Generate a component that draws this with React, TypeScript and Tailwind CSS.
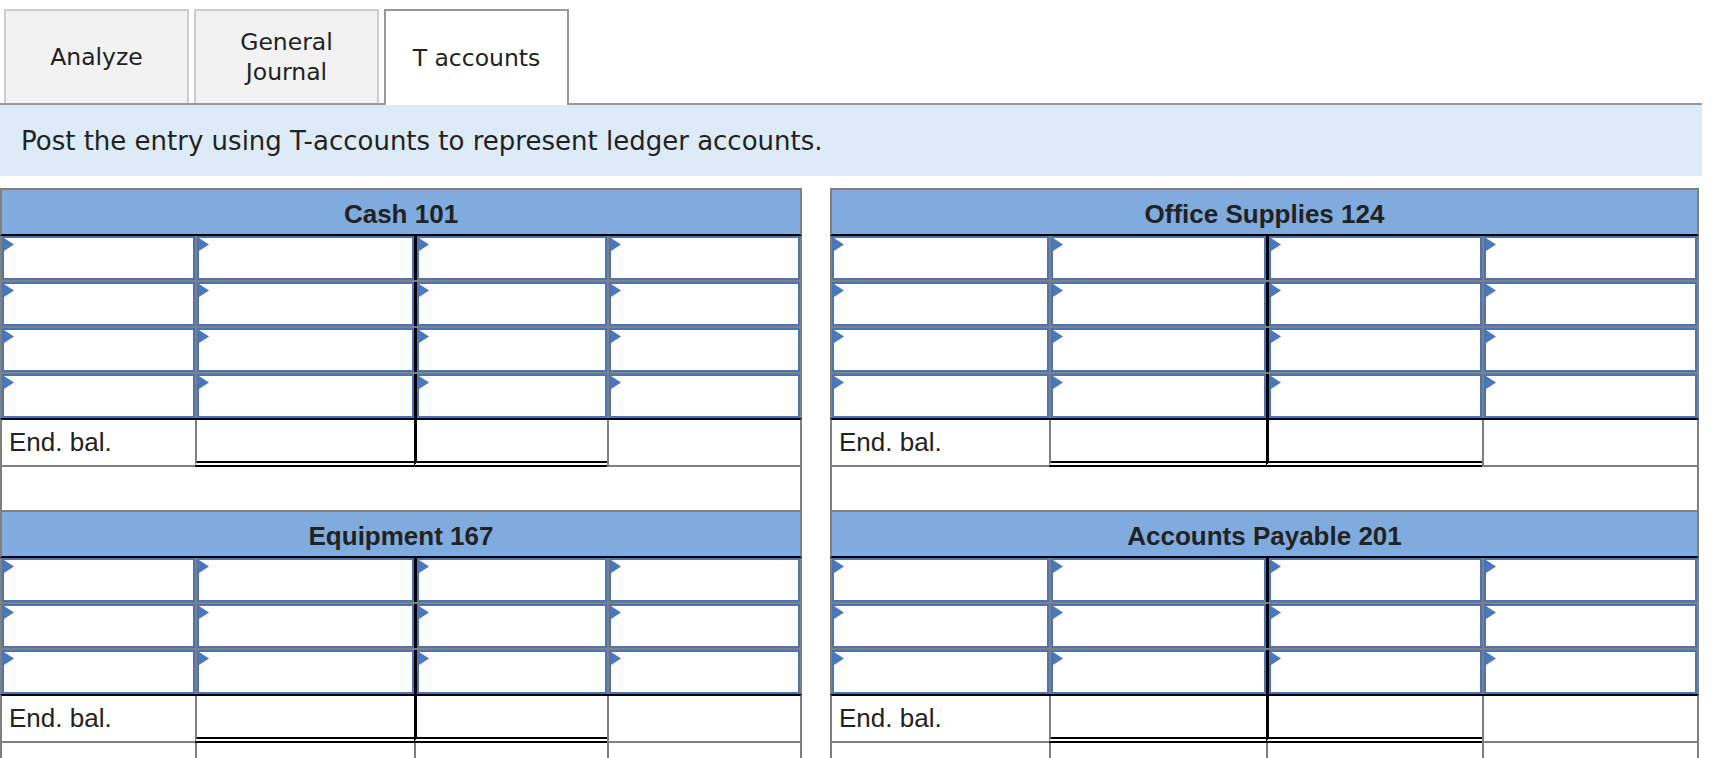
import React from "react";

type Cols = [string, string, string, string];

const LEFT_COLS: Cols = ["w-[193px]", "w-[219px]", "w-[193px]", "w-[193px]"];
const RIGHT_COLS: Cols = ["w-[217px]", "w-[217px]", "w-[216px]", "w-[215px]"];

const Flag = () => (
  <svg
    className="absolute left-0 top-0"
    width="10"
    height="13"
    viewBox="0 0 10 13"
  >
    <polygon points="0,0 10,6.5 0,13" fill="#4a78bd" />
  </svg>
);

const InputCell = () => (
  <div className="relative h-full border-2 border-[#4a74b5] bg-white">
    <Flag />
  </div>
);

const Header: React.FC<{ title: string }> = ({ title }) => (
  <div className="flex h-[48px] items-center justify-center border-2 border-[#808080] border-b-black bg-[#80abdf] pt-[4px] font-['Liberation_Sans',sans-serif] text-[26px] font-bold text-[#222]">
    {title}
  </div>
);

const InputRow: React.FC<{ cols: Cols; first: boolean }> = ({ cols, first }) => (
  <div
    className={
      first
        ? "flex h-[44px] border-x-2 border-[#808080]"
        : "flex h-[46px] border-x-2 border-t-2 border-[#808080]"
    }
  >
    <div className={cols[0]}>
      <InputCell />
    </div>
    <div className={`${cols[1]} border-l-2 border-[#808080]`}>
      <InputCell />
    </div>
    <div className={`${cols[2]} border-l-[3px] border-black`}>
      <InputCell />
    </div>
    <div className={`${cols[3]} border-l-2 border-[#808080]`}>
      <InputCell />
    </div>
  </div>
);

const EndBalRow: React.FC<{ cols: Cols }> = ({ cols }) => (
  <div className="flex h-[49px] border-x-2 border-t-2 border-[#808080] border-t-black font-['Liberation_Sans',sans-serif] text-[26px] text-[#222]">
    <div className={`${cols[0]} flex items-center border-b-2 border-[#808080] pl-[7px]`}>
      End. bal.
    </div>
    <div
      className={`${cols[1]} border-b-[6px] border-l-2 border-[#808080] border-b-black [border-bottom-style:double]`}
    />
    <div
      className={`${cols[2]} border-b-[6px] border-l-[3px] border-black [border-bottom-style:double]`}
    />
    <div className={`${cols[3]} border-b-2 border-l-2 border-[#808080]`} />
  </div>
);

const Spacer = () => <div className="h-[43px] border-x-2 border-[#808080]" />;

const TailRow: React.FC<{ cols: Cols }> = ({ cols }) => (
  <div className="flex h-[43px] border-x-2 border-[#808080]">
    <div className={cols[0]} />
    <div className={`${cols[1]} border-l-2 border-[#808080]`} />
    <div className={`${cols[2]} border-l-2 border-[#808080]`} />
    <div className={`${cols[3]} border-l-2 border-[#808080]`} />
  </div>
);

const TAccount: React.FC<{ title: string; rows: number; cols: Cols }> = ({
  title,
  rows,
  cols,
}) => (
  <>
    <Header title={title} />
    {Array.from({ length: rows }).map((_, i) => (
      <InputRow key={i} cols={cols} first={i === 0} />
    ))}
    <EndBalRow cols={cols} />
  </>
);

const tabBase =
  "flex w-[185px] items-center justify-center border-2 border-b-0 text-center text-[23.5px] leading-[30px] text-[#222]";

export default function App() {
  return (
    <div className="h-[758px] w-[1730px] overflow-hidden bg-white font-['DejaVu_Sans',sans-serif]">
      <div className="flex items-end gap-[5px] pl-[4px] pt-[9px]">
        <div className={`${tabBase} h-[94px] border-[#cdcdcd] bg-[#f2f2f2]`}>
          Analyze
        </div>
        <div className={`${tabBase} h-[94px] border-[#cdcdcd] bg-[#f2f2f2]`}>
          General
          <br />
          Journal
        </div>
        <div
          className={`${tabBase} relative z-10 -mb-[2px] h-[96px] border-[#999] bg-white`}
        >
          T accounts
        </div>
      </div>

      <div className="flex h-[73px] w-[1702px] items-center border-t-2 border-[#999] bg-[#ddebf8] pl-[21px] pt-[2px] text-[26px] text-[#222]">
        Post the entry using T-accounts to represent ledger accounts.
      </div>

      <div className="mt-[12px] flex gap-[28px]">
        <div className="flex w-[802px] flex-col">
          <TAccount title="Cash 101" rows={4} cols={LEFT_COLS} />
          <Spacer />
          <TAccount title="Equipment 167" rows={3} cols={LEFT_COLS} />
          <TailRow cols={LEFT_COLS} />
        </div>
        <div className="flex w-[869px] flex-col">
          <TAccount title="Office Supplies 124" rows={4} cols={RIGHT_COLS} />
          <Spacer />
          <TAccount title="Accounts Payable 201" rows={3} cols={RIGHT_COLS} />
          <TailRow cols={RIGHT_COLS} />
        </div>
      </div>
    </div>
  );
}
